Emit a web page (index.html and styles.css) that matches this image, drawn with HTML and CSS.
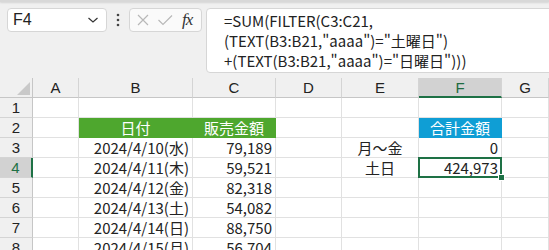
FILE: index.html
```html
<!DOCTYPE html>
<html lang="ja">
<head>
    <meta charset="UTF-8" />
    <title>Excel - FILTER</title>
    <link rel="stylesheet" href="styles.css">
</head>
<body>

    <div class="ribbon-edge"></div>

    <div class="formula-bar">
        <div class="name-box">
            <span>F4</span>
            <svg width="12" height="8" viewBox="0 0 12 8"><path d="M1.5 2 L6 6 L10.5 2" fill="none" stroke="#333" stroke-width="1.2"/></svg>
        </div>
        <div class="grip">
            <svg width="4" height="14" viewBox="0 0 4 14"><circle cx="2" cy="2" r="1.3" fill="#444"/><circle cx="2" cy="7" r="1.3" fill="#444"/><circle cx="2" cy="12" r="1.3" fill="#444"/></svg>
        </div>
        <div class="fx-box">
            <svg width="14" height="14" viewBox="0 0 14 14"><path d="M2 2 L12 12 M12 2 L2 12" stroke="#b8b8b8" stroke-width="1.2"/></svg>
            <svg width="16" height="14" viewBox="0 0 16 14"><path d="M1.5 7 L6 11.5 L15 2.5" fill="none" stroke="#b8b8b8" stroke-width="1.2"/></svg>
            <span class="fx">fx</span>
        </div>
        <div class="formula">=SUM(FILTER(C3:C21,<br>(TEXT(B3:B21,"aaaa")="土曜日")<br>+(TEXT(B3:B21,"aaaa")="日曜日")))</div>
    </div>

    <div class="sheet">
        <!-- column headers -->
        <div class="corner"><span class="tri"></span></div>
        <div class="col-head">A</div>
        <div class="col-head">B</div>
        <div class="col-head">C</div>
        <div class="col-head">D</div>
        <div class="col-head">E</div>
        <div class="col-head active">F</div>
        <div class="col-head">G</div>

        <!-- row 1 -->
        <div class="row-head">1</div>
        <div class="cell"></div><div class="cell"></div><div class="cell"></div><div class="cell"></div><div class="cell"></div><div class="cell"></div><div class="cell"></div>

        <!-- row 2 -->
        <div class="row-head">2</div>
        <div class="cell"></div>
        <div class="cell fill-green center">日付</div>
        <div class="cell fill-green center">販売金額</div>
        <div class="cell"></div>
        <div class="cell"></div>
        <div class="cell fill-blue center">合計金額</div>
        <div class="cell"></div>

        <!-- row 3 -->
        <div class="row-head">3</div>
        <div class="cell"></div>
        <div class="cell right">2024/4/10(水)</div>
        <div class="cell right">79,189</div>
        <div class="cell"></div>
        <div class="cell center">月～金</div>
        <div class="cell right">0</div>
        <div class="cell"></div>

        <!-- row 4 -->
        <div class="row-head active">4</div>
        <div class="cell"></div>
        <div class="cell right">2024/4/11(木)</div>
        <div class="cell right">59,521</div>
        <div class="cell"></div>
        <div class="cell center">土日</div>
        <div class="cell right selected">424,973</div>
        <div class="cell"></div>

        <!-- row 5 -->
        <div class="row-head">5</div>
        <div class="cell"></div>
        <div class="cell right">2024/4/12(金)</div>
        <div class="cell right">82,318</div>
        <div class="cell"></div><div class="cell"></div><div class="cell"></div><div class="cell"></div>

        <!-- row 6 -->
        <div class="row-head">6</div>
        <div class="cell"></div>
        <div class="cell right">2024/4/13(土)</div>
        <div class="cell right">54,082</div>
        <div class="cell"></div><div class="cell"></div><div class="cell"></div><div class="cell"></div>

        <!-- row 7 -->
        <div class="row-head">7</div>
        <div class="cell"></div>
        <div class="cell right">2024/4/14(日)</div>
        <div class="cell right">88,750</div>
        <div class="cell"></div><div class="cell"></div><div class="cell"></div><div class="cell"></div>

        <!-- row 8 -->
        <div class="row-head">8</div>
        <div class="cell"></div>
        <div class="cell right">2024/4/15(月)</div>
        <div class="cell right">56,704</div>
        <div class="cell"></div><div class="cell"></div><div class="cell"></div><div class="cell"></div>
    </div>

</body>
</html>
```

FILE: styles.css
```css
body {
    margin: 0;
    width: 549px;
    height: 250px;
    overflow: hidden;
    background: #f0f0f0;
    font-family: "Noto Sans CJK JP", "Noto Sans", sans-serif;
    color: #222;
}

.ribbon-edge {
    height: 2px;
    background: #d8d8d8;
    box-shadow: 0 1px 2px rgba(0, 0, 0, 0.12);
}

/* formula bar */

.formula-bar {
    display: flex;
    align-items: flex-start;
    height: 76px;
    padding: 6px 0 0 7px;
    box-sizing: border-box;
}

.name-box {
    width: 100px;
    height: 24px;
    box-sizing: border-box;
    background: white;
    border: 1px solid #d6d6d6;
    border-radius: 4px;
    display: flex;
    align-items: center;
    justify-content: space-between;
    padding: 0 7px 0 5px;
    font-family: "Liberation Sans", sans-serif;
    font-size: 16px;
    color: #222;
}

.grip {
    width: 22px;
    height: 24px;
    display: flex;
    align-items: center;
    justify-content: center;
}

.fx-box {
    width: 73px;
    height: 24px;
    box-sizing: border-box;
    background: #fafafa;
    border: 1px solid #d6d6d6;
    border-radius: 4px;
    display: flex;
    align-items: center;
    gap: 7px;
    padding: 0 4px 0 6px;
}

.fx {
    font-family: "Liberation Serif", serif;
    font-style: italic;
    font-size: 17px;
    color: #333;
    margin-left: 2px;
    letter-spacing: -1px;
}

.formula {
    flex: 1;
    margin-left: 4px;
    height: 65px;
    margin-right: -10px;
    box-sizing: border-box;
    background: white;
    border: 1px solid #d6d6d6;
    border-radius: 4px;
    padding: 2px 0 0 17px;
    font-size: 15px;
    line-height: 20px;
    color: #222;
    white-space: nowrap;
}

/* sheet grid */

.sheet {
    display: grid;
    grid-template-columns: 33px 46px 114px 83px 66px 77px 83px 47px;
    grid-auto-rows: 20px;
    background: white;
}

.sheet > div {
    box-sizing: border-box;
    border-right: 1px solid #e1e1e1;
    border-bottom: 1px solid #e1e1e1;
    font-size: 15px;
    line-height: 19px;
    white-space: nowrap;
    overflow: hidden;
}

.corner {
    position: relative;
    background: #f0f0f0;
    border-right: 1px solid #c6c6c6 !important;
    border-bottom: 1px solid #c6c6c6 !important;
}

.tri {
    position: absolute;
    right: 2px;
    bottom: 2px;
    width: 0;
    height: 0;
    border-left: 13px solid transparent;
    border-bottom: 13px solid #c9c9c9;
}

.col-head {
    background: #f0f0f0;
    text-align: center;
    border-right: 1px solid #d4d4d4 !important;
    border-bottom: 1px solid #c6c6c6 !important;
    font-family: "Liberation Sans", sans-serif;
    color: #222;
}

.col-head.active {
    background: #d2d2d2;
    color: #1e6b41;
    border-bottom: 2px solid #1e7145 !important;
}

.row-head {
    background: #f0f0f0;
    text-align: center;
    border-right: 1px solid #c6c6c6 !important;
    border-bottom: 1px solid #d4d4d4 !important;
    font-family: "Liberation Sans", sans-serif;
    color: #222;
}

.row-head.active {
    background: #d2d2d2;
    color: #1e7145;
    border-right: 2px solid #1e7145 !important;
}

.cell {
    padding: 0 3px;
}

.right {
    text-align: right;
}

.center {
    text-align: center;
}

.fill-green {
    background: #4ea72e;
    color: white;
    border-color: #4ea72e !important;
}

.fill-blue {
    background: #0f9ed5;
    color: white;
    border-color: #0f9ed5 !important;
}

.selected {
    position: relative;
    overflow: visible !important;
}

.selected::after {
    content: "";
    position: absolute;
    left: -1px;
    top: -1px;
    right: -1px;
    bottom: -1px;
    border: 2px solid #1e7145;
}

.selected::before {
    content: "";
    position: absolute;
    right: -4px;
    bottom: -4px;
    width: 5px;
    height: 5px;
    background: #1e7145;
    border: 1px solid white;
    z-index: 1;
}
```
